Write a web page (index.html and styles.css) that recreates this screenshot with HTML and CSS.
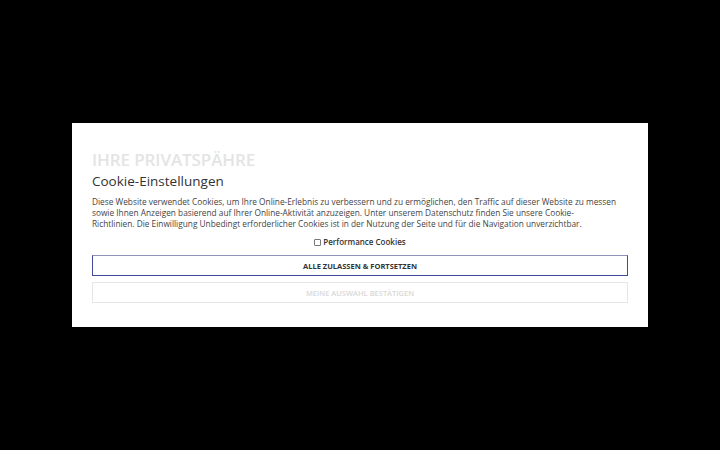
FILE: index.html
```html
<!DOCTYPE html>
<html lang="de">
<head>
<meta charset="utf-8">
<link rel="stylesheet" href="styles.css">
</head>
<body>
<div class="overlay">
  <div class="modal">
    <div class="kicker">IHRE PRIVATSPÄHRE</div>
    <h1 class="title">Cookie-Einstellungen</h1>
    <p class="text">Diese Website verwendet Cookies, um Ihre Online-Erlebnis zu verbessern und zu ermöglichen, den Traffic auf dieser Website zu messen sowie Ihnen Anzeigen basierend auf Ihrer Online-Aktivität anzuzeigen. Unter unserem Datenschutz finden Sie unsere Cookie-<br>Richtlinien. Die Einwilligung Unbedingt erforderlicher Cookies ist in der Nutzung der Seite und für die Navigation unverzichtbar.</p>
    <label class="check"><span class="box"></span>Performance Cookies</label>
    <button class="btn btn-primary">ALLE ZULASSEN &amp; FORTSETZEN</button>
    <button class="btn btn-secondary">MEINE AUSWAHL BESTÄTIGEN</button>
  </div>
</div>
</body>
</html>
```
FILE: styles.css
```css
html, body {
  margin: 0;
  padding: 0;
  background: #000;
  width: 720px;
  height: 450px;
  overflow: hidden;
}
.overlay {
  width: 720px;
  height: 450px;
  display: flex;
  justify-content: center;
  padding-top: 123px;
  box-sizing: border-box;
}
.modal {
  width: 576px;
  height: 204px;
  background: #fff;
  box-sizing: border-box;
  padding: 27px 20px 0 20px;
  font-family: "Open Sans", "Liberation Sans", sans-serif;
  display: flex;
  flex-direction: column;
}
.kicker {
  font-family: "Open Sans", sans-serif;
  font-weight: 600;
  font-size: 17px;
  line-height: 20px;
  color: #e4e4e4;
  letter-spacing: -0.1px;
}
.title {
  margin: 2px 0 0 0;
  font-family: "Open Sans", sans-serif;
  font-weight: 400;
  font-size: 13.5px;
  line-height: 18px;
  color: #333;
}
.text {
  margin: 6px 0 0 0;
  font-size: 8.3px;
  line-height: 11px;
  color: #444;
  padding-right: 6px;
}
.check {
  margin-top: 8px;
  display: flex;
  align-items: center;
  justify-content: center;
  font-size: 8px;
  font-weight: 600;
  line-height: 10px;
  color: #333;
}
.box {
  width: 5px;
  height: 5px;
  border: 1px solid #777;
  border-radius: 1px;
  margin-right: 2px;
}
.btn {
  display: block;
  width: 536px;
  height: 21px;
  box-sizing: border-box;
  background: #fff;
  font-family: "Open Sans", sans-serif;
  font-size: 7.5px;
  font-weight: 700;
  padding: 0;
  text-align: center;
}
.btn-primary {
  margin-top: 8px;
  border: 1px solid #3f4c9c;
  border-top-color: #8c92b8;
  color: #333;
}
.btn-secondary {
  margin-top: 6px;
  border: 1px solid #e6e6e6;
  color: #d8d8d8;
  font-weight: 600;
}
```
